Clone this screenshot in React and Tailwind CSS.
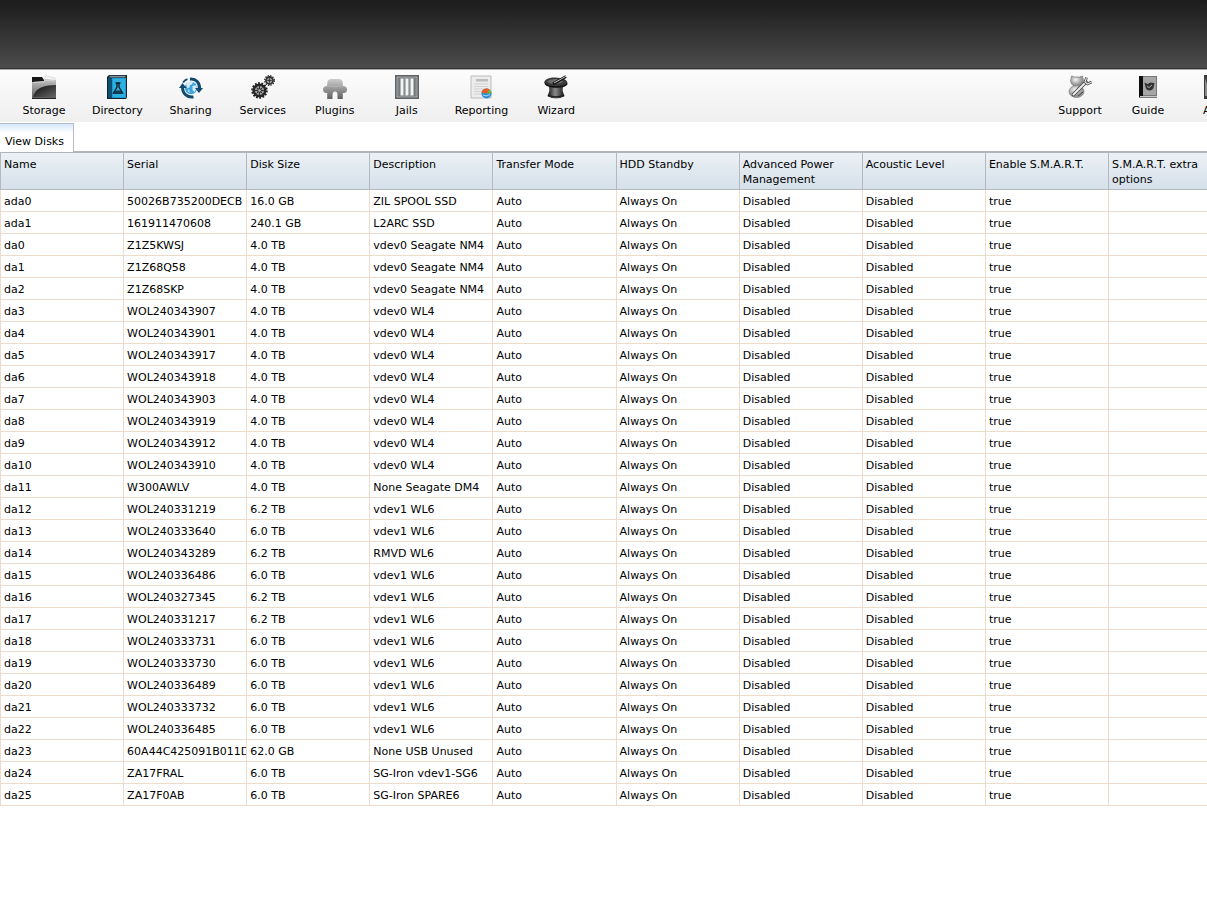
import { useState } from 'react';

/* =========================
   TOOLBAR ICONS
========================= */
const StorageIcon = () => (
  <svg className="w-6 h-6" viewBox="0 0 24 24">
    <defs>
      <linearGradient id="folderFront" x1="0" y1="0" x2="0" y2="1">
        <stop offset="0" stopColor="#c4c4c4" />
        <stop offset="1" stopColor="#5a5a5a" />
      </linearGradient>
      <linearGradient id="folderShade" x1="0" y1="0" x2="1" y2="1">
        <stop offset="0" stopColor="#0c0c0c" />
        <stop offset="1" stopColor="#666" />
      </linearGradient>
    </defs>
    <path d="M0 2h10l2 3v5H0z" fill="#161616" />
    <path d="M12.500 3l1.500-2 9 2v4H12.500z" fill="#f6f6f6" stroke="#cfcfcf" strokeWidth=".6" />
    <path d="M0 7l12-1 1-2 11 1v19H0z" fill="url(#folderFront)" />
    <path d="M1 22C3 14 10 10 24 10v12z" fill="url(#folderShade)" />
    <path d="M0 23.500h24" stroke="#222" />
    <path d="M1 7.500l11-.7 1-1.500 10 .7" stroke="#dcdcdc" strokeWidth=".8" fill="none" />
  </svg>
);

const DirectoryIcon = () => (
  <svg className="w-6 h-6" viewBox="0 0 24 24">
    <path d="M2 2l2-2h18v22l-1 2H2z" fill="#12222c" />
    <path d="M4.500 .8h16v1.700h-16z" fill="#7d929c" />
    <path d="M7 3h14v20H7z" fill="#1c9bd0" />
    <path d="M8 4h12v18H8z" fill="#2cb0e2" />
    <path d="M3 3h4v20H3z" fill="#0c4f73" />
    <path d="M10.500 8h5M12 8v4l-3.500 6h9L14 12V8" fill="none" stroke="#0b1a22" strokeWidth="1.300" />
    <path d="M10.500 15.500h5l1.500 2.500H9z" fill="#123f52" />
  </svg>
);

const SharingIcon = () => (
  <svg className="w-6 h-6" viewBox="0 0 24 24">
    <circle cx="12" cy="13" r="6.200" fill="#3fa4dc" />
    <path d="M7 9.500c2-3 5-3.300 7-2.500l-1 2.500-2 .5-.5 2.500-2 1zM13.500 11l4-1 .4 3-2.400 4-2-2z" fill="#d3ecf8" />
    <path d="M8.500 14.500l2 .5.500 3-2-1.500z" fill="#a7d8f0" />
    <path d="M11 4.200C17 3.500 21 8 20.500 14" fill="none" stroke="#114a6e" strokeWidth="3" />
    <path d="M16 13h8l-4 5z" fill="#114a6e" />
    <path d="M14.500 22C8.500 22.800 3.500 19 3.500 12" fill="none" stroke="#114a6e" strokeWidth="3" />
    <path d="M0 13h7.500L3.500 8z" fill="#114a6e" />
    <path d="M4 7.500Q6 5 8.500 4.200" fill="none" stroke="#114a6e" strokeWidth="1.800" />
  </svg>
);

const ServicesIcon = () => (
  <svg className="w-6 h-6" viewBox="0 0 24 24">
    <circle cx="8.500" cy="15.500" r="7.300" fill="none" stroke="#222" strokeWidth="2" strokeDasharray="1.800 1.476" />
    <circle cx="8.500" cy="15.500" r="5.800" fill="#9b9b9b" stroke="#262626" strokeWidth="2.400" />
    <path d="M8.500 11v9M4 15.500h9M5.500 12.500l6 6M11.500 12.500l-6 6" stroke="#333" strokeWidth="1" />
    <circle cx="8.500" cy="15.500" r="1.800" fill="#bbb" stroke="#222" />
    <circle cx="18.500" cy="5.500" r="4.800" fill="none" stroke="#333" strokeWidth="1.400" strokeDasharray="1.400 1.113" />
    <circle cx="18.500" cy="5.500" r="3.500" fill="#aaa" stroke="#333" strokeWidth="1.800" />
    <path d="M18.500 2.500v6M15.500 5.500h6" stroke="#444" strokeWidth=".8" />
    <circle cx="18.500" cy="5.500" r="1.100" fill="#222" />
  </svg>
);

const PluginsIcon = () => (
  <svg className="w-6 h-6" viewBox="0 0 24 24">
    <defs>
      <linearGradient id="plug" x1="0" y1="0" x2="0" y2="1">
        <stop offset="0" stopColor="#cdcdcd" />
        <stop offset=".4" stopColor="#a2a2a2" />
        <stop offset="1" stopColor="#5e5e5e" />
      </linearGradient>
    </defs>
    <path
      d="M7.500 4h9Q19 4 19.500 6.500L20 11q4 0 4 3.500T20.500 18H19.800v6H14.500v-4q0-3.500-2.500-3.500T9.500 20v4H4.200v-6H3.500Q0 18 0 14.500T4 11l.5-4.500Q5 4 7.500 4z"
      fill="url(#plug)"
    />
    <path d="M4.300 10.800q7.700 1.500 15.400 0" stroke="#c0c0c0" strokeWidth=".6" fill="none" />
  </svg>
);

const JailsIcon = () => (
  <svg className="w-6 h-6" viewBox="0 0 24 24">
    <path d="M0 0h24v24H0z" fill="#5f6264" />
    <path d="M1.500 1.500h21v21h-21z" fill="#a7aaac" />
    <path d="M4 3h16v18H4z" fill="#f2f3f3" />
    <path d="M4.500 3v18M9.500 3v18M14.500 3v18M19.500 3v18" stroke="#74777a" strokeWidth="2" />
    <path d="M3 3h18v18H3z" fill="none" stroke="#777a7c" />
    <path d="M10 3v18M15 3v18" stroke="#b9bcbe" strokeWidth=".7" />
  </svg>
);

const ReportingIcon = () => (
  <svg className="w-6 h-6" viewBox="0 0 24 24">
    <path d="M2 1h20v22H2z" fill="#ececec" stroke="#bcbcbc" />
    <path d="M7 4h12v2.500H7z" fill="#bdbdbd" />
    <path d="M5 9h14M5 11.500h14M5 14h10M5 16.500h8M5 19h8" stroke="#d2d2d2" />
    <circle cx="17.500" cy="18.500" r="5" fill="#2d8ed8" />
    <path d="M17.500 18.500l-5-1a5 5 0 0 1 8-3z" fill="#ef5a22" />
    <path d="M17.500 18.500l3-4a5 5 0 0 1 2 3.800z" fill="#78b52f" />
    <path d="M14 20q3 2 7-.5" stroke="#a9dcf7" fill="none" />
  </svg>
);

const WizardIcon = () => (
  <svg className="w-6 h-6" viewBox="0 0 24 24">
    <defs>
      <linearGradient id="hat" x1="0" y1="0" x2="1" y2="0">
        <stop offset="0" stopColor="#111" />
        <stop offset=".45" stopColor="#8a8a8a" />
        <stop offset="1" stopColor="#151515" />
      </linearGradient>
    </defs>
    <path d="M4.500 10h15q-1.500 4-.5 7l1.500 4q-8.500 5-17 0L5 17q1-3-.5-7z" fill="url(#hat)" />
    <path d="M0 7.500Q1 3.500 8 2.500q8-.5 12 1.500 4 2 3.500 5-3 4-11 3.500Q2 12 0 7.500z" fill="#3a3a3a" />
    <path d="M3 6.500q3-3 9-2.500 6 .5 7 3-3 2-8 1.800-6 0-8-2.300z" fill="#6d6d6d" />
    <path d="M1 8.500q3 3.500 11 3.500t11-3" fill="none" stroke="#111" strokeWidth="1.400" />
    <path d="M9 9L22 1.500" stroke="#111" strokeWidth="2.600" />
    <path d="M10 8L22.500 1" stroke="#dedede" strokeWidth=".9" />
    <path d="M4 20.500q8 3 16 0" fill="none" stroke="#222" strokeWidth="1.500" />
  </svg>
);

const SupportIcon = () => (
  <svg className="w-6 h-6" viewBox="0 0 24 24">
    <defs>
      <radialGradient id="body" cx=".4" cy=".35">
        <stop offset="0" stopColor="#f5f5f5" />
        <stop offset="1" stopColor="#929292" />
      </radialGradient>
    </defs>
    <path d="M3.500 1l3 1h5l3-1 1 5q0 4-4 5.500H7Q3 10 2.500 6z" fill="url(#body)" stroke="#858585" strokeWidth=".8" />
    <ellipse cx="8.500" cy="16.500" rx="7.500" ry="6" fill="url(#body)" stroke="#858585" strokeWidth=".8" />
    <path d="M5.500 19.500L18 7" stroke="#444" strokeWidth="3.600" strokeLinecap="round" />
    <path d="M5.500 19.500L18 7" stroke="#eee" strokeWidth="2" strokeLinecap="round" />
    <path d="M18.500 2.500L17 7l2.500 2 4-2" fill="none" stroke="#444" strokeWidth="2.600" />
    <path d="M18.500 2.500L17 7l2.500 2 4-2" fill="none" stroke="#ddd" strokeWidth="1.200" />
    <path d="M10 21l5-4" stroke="#444" />
  </svg>
);

const GuideIcon = () => (
  <svg className="w-6 h-6" viewBox="0 0 24 24">
    <path d="M3 1h18v22H3z" fill="#777" />
    <path d="M7 2h13v18H7z" fill="#a6a6a6" />
    <path d="M3 1h4v21H3z" fill="#0f0f0f" />
    <path d="M4 21.500h17" stroke="#c8c8c8" />
    <path d="M8.500 7.500l3 1.500 3-1.500 4 .5-1 5q-1.500 3-4.500 2.500T9.500 12z" fill="#333" />
    <path d="M11 11.500l2 1 3-2.500" stroke="#aaa" fill="none" />
  </svg>
);

const AlertIcon = () => (
  <svg className="w-6 h-6" viewBox="0 0 24 24">
    <path d="M0 0h24v24H0z" fill="#3b3b3b" />
    <path d="M1 3l6 18H1z" fill="#8a8a8a" />
    <path d="M12 5v9M12 17v3" stroke="#eee" strokeWidth="3" />
  </svg>
);

const mainItems = [
  { label: 'Storage', Icon: StorageIcon },
  { label: 'Directory', Icon: DirectoryIcon },
  { label: 'Sharing', Icon: SharingIcon },
  { label: 'Services', Icon: ServicesIcon },
  { label: 'Plugins', Icon: PluginsIcon },
  { label: 'Jails', Icon: JailsIcon },
  { label: 'Reporting', Icon: ReportingIcon },
  { label: 'Wizard', Icon: WizardIcon },
];

const helpItems = [
  { label: 'Support', Icon: SupportIcon },
  { label: 'Guide', Icon: GuideIcon },
  { label: 'Alert', Icon: AlertIcon },
];

/* =========================
   DISKS
========================= */
const columns = [
  'Name',
  'Serial',
  'Disk Size',
  'Description',
  'Transfer Mode',
  'HDD Standby',
  'Advanced Power Management',
  'Acoustic Level',
  'Enable S.M.A.R.T.',
  'S.M.A.R.T. extra options',
];

const disks = [
  ['ada0', '50026B735200DECB', '16.0 GB', 'ZIL SPOOL SSD'],
  ['ada1', '161911470608', '240.1 GB', 'L2ARC SSD'],
  ['da0', 'Z1Z5KWSJ', '4.0 TB', 'vdev0 Seagate NM4'],
  ['da1', 'Z1Z68Q58', '4.0 TB', 'vdev0 Seagate NM4'],
  ['da2', 'Z1Z68SKP', '4.0 TB', 'vdev0 Seagate NM4'],
  ['da3', 'WOL240343907', '4.0 TB', 'vdev0 WL4'],
  ['da4', 'WOL240343901', '4.0 TB', 'vdev0 WL4'],
  ['da5', 'WOL240343917', '4.0 TB', 'vdev0 WL4'],
  ['da6', 'WOL240343918', '4.0 TB', 'vdev0 WL4'],
  ['da7', 'WOL240343903', '4.0 TB', 'vdev0 WL4'],
  ['da8', 'WOL240343919', '4.0 TB', 'vdev0 WL4'],
  ['da9', 'WOL240343912', '4.0 TB', 'vdev0 WL4'],
  ['da10', 'WOL240343910', '4.0 TB', 'vdev0 WL4'],
  ['da11', 'W300AWLV', '4.0 TB', 'None Seagate DM4'],
  ['da12', 'WOL240331219', '6.2 TB', 'vdev1 WL6'],
  ['da13', 'WOL240333640', '6.0 TB', 'vdev1 WL6'],
  ['da14', 'WOL240343289', '6.2 TB', 'RMVD WL6'],
  ['da15', 'WOL240336486', '6.0 TB', 'vdev1 WL6'],
  ['da16', 'WOL240327345', '6.2 TB', 'vdev1 WL6'],
  ['da17', 'WOL240331217', '6.2 TB', 'vdev1 WL6'],
  ['da18', 'WOL240333731', '6.0 TB', 'vdev1 WL6'],
  ['da19', 'WOL240333730', '6.0 TB', 'vdev1 WL6'],
  ['da20', 'WOL240336489', '6.0 TB', 'vdev1 WL6'],
  ['da21', 'WOL240333732', '6.0 TB', 'vdev1 WL6'],
  ['da22', 'WOL240336485', '6.0 TB', 'vdev1 WL6'],
  ['da23', '60A44C425091B011D', '62.0 GB', 'None USB Unused'],
  ['da24', 'ZA17FRAL', '6.0 TB', 'SG-Iron vdev1-SG6'],
  ['da25', 'ZA17F0AB', '6.0 TB', 'SG-Iron SPARE6'],
];

// Every disk uses the same power and S.M.A.R.T. settings
const defaults = ['Auto', 'Always On', 'Disabled', 'Disabled', 'true', ''];

const ToolbarButton = ({ label, Icon, className }) => (
  <button type="button" className={`flex flex-col items-center shrink-0 cursor-pointer ${className}`}>
    <Icon />
    <span className="mt-1 leading-4">{label}</span>
  </button>
);

const App = () => {
  const [selected, setSelected] = useState(null);

  return (
    <div className="min-h-screen overflow-hidden bg-white text-black text-[11px] font-['Verdana','DejaVu_Sans',sans-serif]">
      {/* HEADER */}
      <header className="h-[69px] bg-gradient-to-b from-[#1c1c1c] to-[#4c4c4c] border-b border-[#333]" />

      {/* TOOLBAR */}
      <nav className="flex justify-between h-[53px] pl-2 pt-[5px] border-t border-[#a5aaad] bg-gradient-to-b from-[#fcfcfc] to-[#efefef]">
        <div className="flex">
          {mainItems.map((item) => (
            <ToolbarButton key={item.label} {...item} className="min-w-[72px] px-3" />
          ))}
        </div>
        <div className="flex -mr-[43px]">
          {helpItems.map((item) => (
            <ToolbarButton key={item.label} {...item} className="w-[68px]" />
          ))}
        </div>
      </nav>

      {/* TABS */}
      <div role="tablist" className="flex h-[30px] mt-px border-b-2 border-[#b0b5ba]">
        <button
          type="button"
          role="tab"
          aria-selected="true"
          className="-mb-px pl-[5px] pr-[9px] pt-2 border-t border-r border-[#b5bcc7] bg-gradient-to-b from-[#d5e8fa] to-white to-30%"
        >
          View Disks
        </button>
      </div>

      {/* DISK TABLE */}
      <table className="w-[102%] table-fixed border-separate border-spacing-0 text-left leading-[15px]">
        <thead>
          <tr className="bg-gradient-to-b from-[#ebf0f5] to-[#d5e0ea]">
            {columns.map((column) => (
              <th
                key={column}
                className="px-[3px] pt-1 pb-0.5 align-top font-normal border-l border-b border-[#b4b9be]"
              >
                {column}
              </th>
            ))}
          </tr>
        </thead>
        <tbody>
          {disks.map((disk) => (
            <tr
              key={disk[0]}
              onClick={() => setSelected(disk[0])}
              className={selected === disk[0] ? 'bg-[#cee6fa]' : 'hover:bg-[#e9f2fe]'}
            >
              {[...disk, ...defaults].map((value, i) => (
                <td
                  key={columns[i]}
                  className="h-[22px] px-[3px] pt-1 pb-0.5 overflow-hidden whitespace-nowrap border-l border-b border-[#eedccb]"
                >
                  {value}
                </td>
              ))}
            </tr>
          ))}
        </tbody>
      </table>
    </div>
  );
};

export default App;
